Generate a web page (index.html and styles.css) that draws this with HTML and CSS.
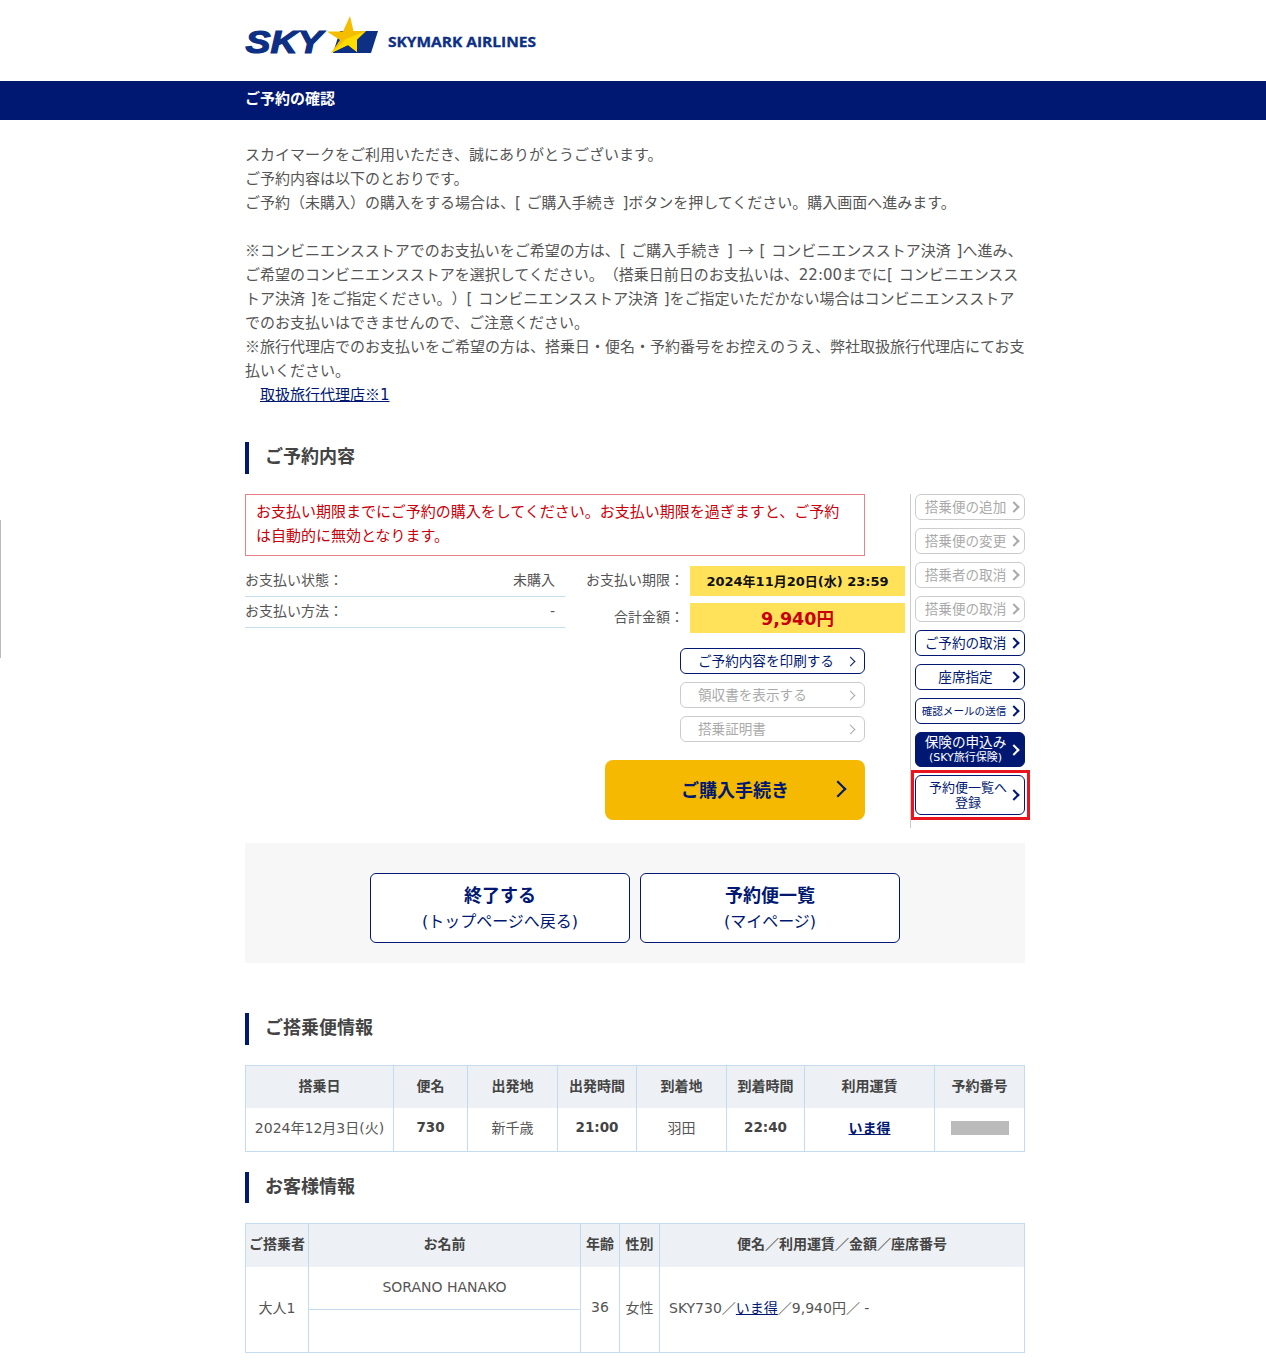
FILE: index.html
```html
<!DOCTYPE html>
<html lang="ja">
<head>
    <meta charset="UTF-8">
    <meta name="viewport" content="width=device-width, initial-scale=1.0">
    <title>ご予約の確認 - スカイマーク</title>
    <link rel="stylesheet" href="styles.css">
</head>
<body>

<span class="edge-line"></span>

<header class="site-header">
    <svg class="logo" width="300" height="44" viewBox="0 0 300 44">
        <polygon class="logo-blue" points="95,16 133,16 126,38 88,38"/>
        <text class="logo-sky" transform="translate(0.5 38) scale(1.17 1)">SKY</text>
        <polygon class="logo-star" points="105,1 108.5,16 121,16 112,24.5 112,37 103,30 86,38 95,25 82,16.5 98,16.5"/>
        <polygon class="logo-star-light" points="121,16 112,24.5 112,37 103,30 86,38 101,24"/>
        <text class="logo-name" x="143" y="32" textLength="148" lengthAdjust="spacingAndGlyphs">SKYMARK AIRLINES</text>
    </svg>
</header>

<div class="title-bar">
    <h1>ご予約の確認</h1>
</div>

<div class="wrap">
    <p class="intro">
        スカイマークをご利用いただき、誠にありがとうございます。<br>
        ご予約内容は以下のとおりです。<br>
        ご予約（未購入）の購入をする場合は、[ ご購入手続き ]ボタンを押してください。購入画面へ進みます。<br>
        <br>
        <span class="cjk">※</span>コンビニエンスストアでのお支払いをご希望の方は、[ ご購入手続き ] <span class="cjk">→</span> [ コンビニエンスストア決済 ]へ進み、<br>
        ご希望のコンビニエンスストアを選択してください。（搭乗日前日のお支払いは、22:00までに[ コンビニエンスス<br>
        トア決済 ]をご指定ください。）[ コンビニエンスストア決済 ]をご指定いただかない場合はコンビニエンスストア<br>
        でのお支払いはできませんので、ご注意ください。<br>
        <span class="cjk">※</span>旅行代理店でのお支払いをご希望の方は、搭乗日・便名・予約番号をお控えのうえ、弊社取扱旅行代理店にてお支<br>
        払いください。<br>
        <a class="agent-link" href="#">取扱旅行代理店<span class="cjk">※</span>1</a>
    </p>

    <h2 class="section-title first">ご予約内容</h2>

    <div class="booking">
        <div class="booking-main">
            <div class="alert">お支払い期限までにご予約の購入をしてください。お支払い期限を過ぎますと、ご予約<br>は自動的に無効となります。</div>

            <div class="status">
                <dl class="status-list">
                    <div class="status-row">
                        <dt>お支払い状態：</dt>
                        <dd>未購入</dd>
                    </div>
                    <div class="status-row">
                        <dt>お支払い方法：</dt>
                        <dd>-</dd>
                    </div>
                </dl>
                <div class="deadline">
                    <div class="deadline-row">
                        <span class="deadline-label">お支払い期限：</span>
                        <strong class="deadline-value">2024年11月20日(水) 23:59</strong>
                    </div>
                    <div class="deadline-row">
                        <span class="deadline-label">合計金額：</span>
                        <strong class="deadline-value price">9,940円</strong>
                    </div>
                </div>
            </div>

            <div class="actions">
                <a class="btn wide" href="#"><span>ご予約内容を印刷する</span></a>
                <a class="btn wide disabled" href="#"><span>領収書を表示する</span></a>
                <a class="btn wide disabled" href="#"><span>搭乗証明書</span></a>
                <a class="btn-buy" href="#"><span>ご購入手続き</span></a>
            </div>
        </div>

        <nav class="side">
            <a class="btn side-btn disabled" href="#"><span>搭乗便の追加</span></a>
            <a class="btn side-btn disabled" href="#"><span>搭乗便の変更</span></a>
            <a class="btn side-btn disabled" href="#"><span>搭乗者の取消</span></a>
            <a class="btn side-btn disabled" href="#"><span>搭乗便の取消</span></a>
            <a class="btn side-btn" href="#"><span>ご予約の取消</span></a>
            <a class="btn side-btn" href="#"><span>座席指定</span></a>
            <a class="btn side-btn small" href="#"><span>確認メールの送信</span></a>
            <a class="btn side-btn dark" href="#"><span>保険の申込み<small>(SKY旅行保険)</small></span></a>
            <a class="btn side-btn marked" href="#"><span>予約便一覧へ<br>登録</span></a>
        </nav>
    </div>

    <div class="exit-panel">
        <a class="exit-btn" href="#"><b>終了する</b>(トップページへ戻る)</a>
        <a class="exit-btn" href="#"><b>予約便一覧</b>(マイページ)</a>
    </div>

    <h2 class="section-title flights">ご搭乗便情報</h2>

    <table class="info flight-table">
        <colgroup>
            <col class="c148"><col class="c74"><col class="c90"><col class="c79">
            <col class="c90"><col class="c78"><col class="c130"><col>
        </colgroup>
        <thead>
            <tr>
                <th>搭乗日</th><th>便名</th><th>出発地</th><th>出発時間</th>
                <th>到着地</th><th>到着時間</th><th>利用運賃</th><th>予約番号</th>
            </tr>
        </thead>
        <tbody>
            <tr>
                <td>2024年12月3日(火)</td>
                <td><b>730</b></td>
                <td>新千歳</td>
                <td><b>21:00</b></td>
                <td>羽田</td>
                <td><b>22:40</b></td>
                <td><a class="fare-link bold" href="#">いま得</a></td>
                <td><span class="masked"></span></td>
            </tr>
        </tbody>
    </table>

    <h2 class="section-title customers">お客様情報</h2>

    <table class="info customer-table">
        <colgroup>
            <col class="c63"><col class="c272"><col class="c39"><col class="c40"><col>
        </colgroup>
        <thead>
            <tr>
                <th>ご搭乗者</th><th>お名前</th><th>年齢</th><th>性別</th><th>便名／利用運賃／金額／座席番号</th>
            </tr>
        </thead>
        <tbody>
            <tr>
                <td rowspan="2">大人1</td>
                <td class="name">SORANO HANAKO</td>
                <td rowspan="2">36</td>
                <td rowspan="2">女性</td>
                <td rowspan="2" class="left">SKY730／<a class="fare-link" href="#">いま得</a>／9,940円／ -</td>
            </tr>
            <tr>
                <td class="name"></td>
            </tr>
        </tbody>
    </table>
</div>

</body>
</html>
```

FILE: styles.css
```css
* {
    box-sizing: border-box;
}
body {
    margin: 0;
    padding: 0 0 15px;
    background-color: #fff;
    color: #555;
    font-family: "DejaVu Sans", "Noto Sans CJK JP", sans-serif;
    font-size: 14px;
    text-spacing-trim: space-all;
}
a {
    text-decoration: none;
}
.edge-line {
    position: absolute;
    left: 0;
    top: 520px;
    width: 1px;
    height: 138px;
    background-color: #bbb;
}
.site-header {
    height: 81px;
    padding: 15px 0 0 245px;
}
.logo {
    display: block;
}
.logo-blue {
    fill: #0d2f84;
}
.logo-star {
    fill: #f5bd00;
}
.logo-star-light {
    fill: #ffdc00;
}
.logo-sky {
    fill: #0d2f84;
    font-family: "Liberation Sans", sans-serif;
    font-size: 32px;
    font-weight: bold;
    font-style: italic;
    stroke: #0d2f84;
    stroke-width: 1.2px;
}
.logo-name {
    fill: #0d2f84;
    font-family: "Open Sans", sans-serif;
    font-size: 14px;
    font-weight: bold;
    stroke: #0d2f84;
    stroke-width: 0.3px;
}
.title-bar {
    height: 39px;
    padding-left: 245px;
    background-color: #001871;
}
.title-bar h1 {
    margin: 0;
    color: #fff;
    font-size: 15px;
    line-height: 36px;
}
.wrap {
    width: 780px;
    margin-left: 245px;
}
.intro {
    margin: 23px 0 0;
    font-size: 15px;
    line-height: 24px;
    white-space: nowrap;
    word-spacing: 1px;
}
.cjk {
    font-family: "Noto Sans CJK JP", sans-serif;
    line-height: 1;
}
.agent-link {
    margin-left: 15px;
    color: #001871;
    text-decoration: underline;
}
.section-title {
    height: 32px;
    margin: 0 0 20px;
    padding-left: 16px;
    border-left: 4px solid #001871;
    color: #444;
    font-size: 18px;
    line-height: 29px;
}
.section-title.first {
    margin-top: 35px;
}
.section-title.flights {
    margin-top: 50px;
}
.section-title.customers {
    margin-top: 20px;
    height: 31px;
}

/* ご予約内容 */
.booking {
    display: flex;
}
.booking-main {
    width: 665px;
}
.alert {
    width: 620px;
    height: 62px;
    padding: 5px 10px;
    border: 1px solid #e8808a;
    color: #c8000a;
    font-size: 15px;
    line-height: 24px;
    white-space: nowrap;
}
.status {
    display: flex;
    margin-top: 10px;
}
.status-list {
    width: 320px;
    margin: 0;
}
.status-row {
    display: flex;
    justify-content: space-between;
    height: 31px;
    padding-right: 10px;
    border-bottom: 1px solid #c5dcee;
    line-height: 28px;
}
.status-row dd {
    margin: 0;
}
.deadline {
    display: flex;
    flex-direction: column;
    gap: 7px;
    width: 340px;
}
.deadline-row {
    display: flex;
    justify-content: flex-end;
    align-items: center;
    gap: 6px;
    height: 30px;
}
.deadline-label {
    margin-bottom: 4px;
}
.deadline-value {
    width: 215px;
    height: 30px;
    background-color: #ffe15a;
    color: #111;
    font-size: 13px;
    line-height: 32px;
    text-align: center;
}
.deadline-value.price {
    color: #c8000a;
    font-size: 17.5px;
}
.actions {
    display: flex;
    flex-direction: column;
    align-items: flex-end;
    gap: 8px;
    width: 620px;
    margin-top: 15px;
}

/* ボタン */
.btn {
    display: flex;
    align-items: center;
    height: 26px;
    border: 1px solid #001871;
    border-radius: 6px;
    background-color: #fff;
    color: #001871;
    font-size: 13.6px;
    line-height: 14px;
}
.btn::after {
    content: "";
    flex: none;
    width: 6px;
    height: 6px;
    margin-right: 6px;
    border-top: 2px solid currentColor;
    border-right: 2px solid currentColor;
    transform: rotate(45deg);
}
.btn span {
    flex: 1;
    padding: 0 0 0 5px;
    text-align: center;
}
.btn.wide {
    width: 185px;
}
.btn.wide span {
    padding-left: 17px;
    text-align: left;
}
.btn.wide::after {
    margin-right: 10px;
    border-width: 1.5px 1.5px 0 0;
}
.btn.disabled {
    border-color: #ccc;
    color: #aaa;
}
.btn-buy {
    display: flex;
    align-items: center;
    width: 260px;
    height: 60px;
    margin-top: 10px;
    padding: 0 0 2px 76px;
    border-radius: 8px;
    background-color: #f4b900;
    color: #001871;
    font-size: 18px;
    font-weight: bold;
}
.btn-buy span {
    flex: 1;
}
.btn-buy::after {
    content: "";
    flex: none;
    width: 10px;
    height: 10px;
    margin-right: 21px;
    border-top: 2.5px solid currentColor;
    border-right: 2.5px solid currentColor;
    transform: rotate(45deg);
}
.side {
    display: flex;
    flex-direction: column;
    gap: 8px;
    width: 115px;
    padding: 0 0 13px 4px;
    border-left: 1px solid #ccc;
}
.side-btn {
    width: 110px;
}
.side-btn.small {
    font-size: 10.6px;
}
.side-btn.small span {
    padding-left: 2px;
}
.side-btn.dark {
    height: 35px;
    background-color: #001871;
    color: #fff;
    line-height: 15px;
}
.side-btn.dark small {
    display: block;
    font-size: 11px;
}
.side-btn.marked {
    position: relative;
    height: 40px;
    font-size: 13px;
    line-height: 15px;
}
.side-btn.marked span {
    padding-left: 10px;
}
.side-btn.marked::before {
    content: "";
    position: absolute;
    top: -6px;
    right: -6px;
    bottom: -6px;
    left: -5px;
    border: 3px solid #e8141e;
}

/* 終了ボタン */
.exit-panel {
    display: flex;
    justify-content: center;
    gap: 10px;
    height: 120px;
    margin-top: 15px;
    padding-top: 30px;
    background-color: #f7f7f7;
}
.exit-btn {
    width: 260px;
    height: 70px;
    padding-top: 9px;
    border: 1px solid #001871;
    border-radius: 6px;
    background-color: #fff;
    color: #001871;
    font-size: 16px;
    line-height: 26px;
    text-align: center;
}
.exit-btn b {
    display: block;
    font-size: 18px;
}

/* テーブル */
.info {
    width: 780px;
    border-collapse: collapse;
    table-layout: fixed;
    border: 1px solid #c5dcee;
}
.info th,
.info td {
    padding: 0 0 4px;
    border-left: 1px solid #c5dcee;
    text-align: center;
    font-size: 14px;
    white-space: nowrap;
}
.info th {
    background-color: #edf0f4;
    color: #444;
    font-weight: bold;
}
.info b {
    color: #444;
    font-size: 13.5px;
}
.info td.left {
    padding-left: 9px;
    text-align: left;
}
.info td.name {
    padding-bottom: 1px;
}
.flight-table thead tr {
    height: 42px;
}
.flight-table tbody tr {
    height: 44px;
}
.customer-table thead tr {
    height: 43px;
}
.customer-table tbody tr {
    height: 43px;
}
.customer-table tbody tr:first-child td.name {
    border-bottom: 1px solid #c5dcee;
}
.fare-link {
    color: #001871;
    text-decoration: underline;
}
.fare-link.bold {
    font-weight: bold;
}
.masked {
    display: inline-block;
    width: 58px;
    height: 14px;
    margin-left: 1px;
    background-color: #bbb;
    vertical-align: middle;
}
.c148 { width: 148px; }
.c74 { width: 74px; }
.c90 { width: 90px; }
.c79 { width: 79px; }
.c78 { width: 78px; }
.c130 { width: 130px; }
.c63 { width: 63px; }
.c272 { width: 272px; }
.c39 { width: 39px; }
.c40 { width: 40px; }
```
